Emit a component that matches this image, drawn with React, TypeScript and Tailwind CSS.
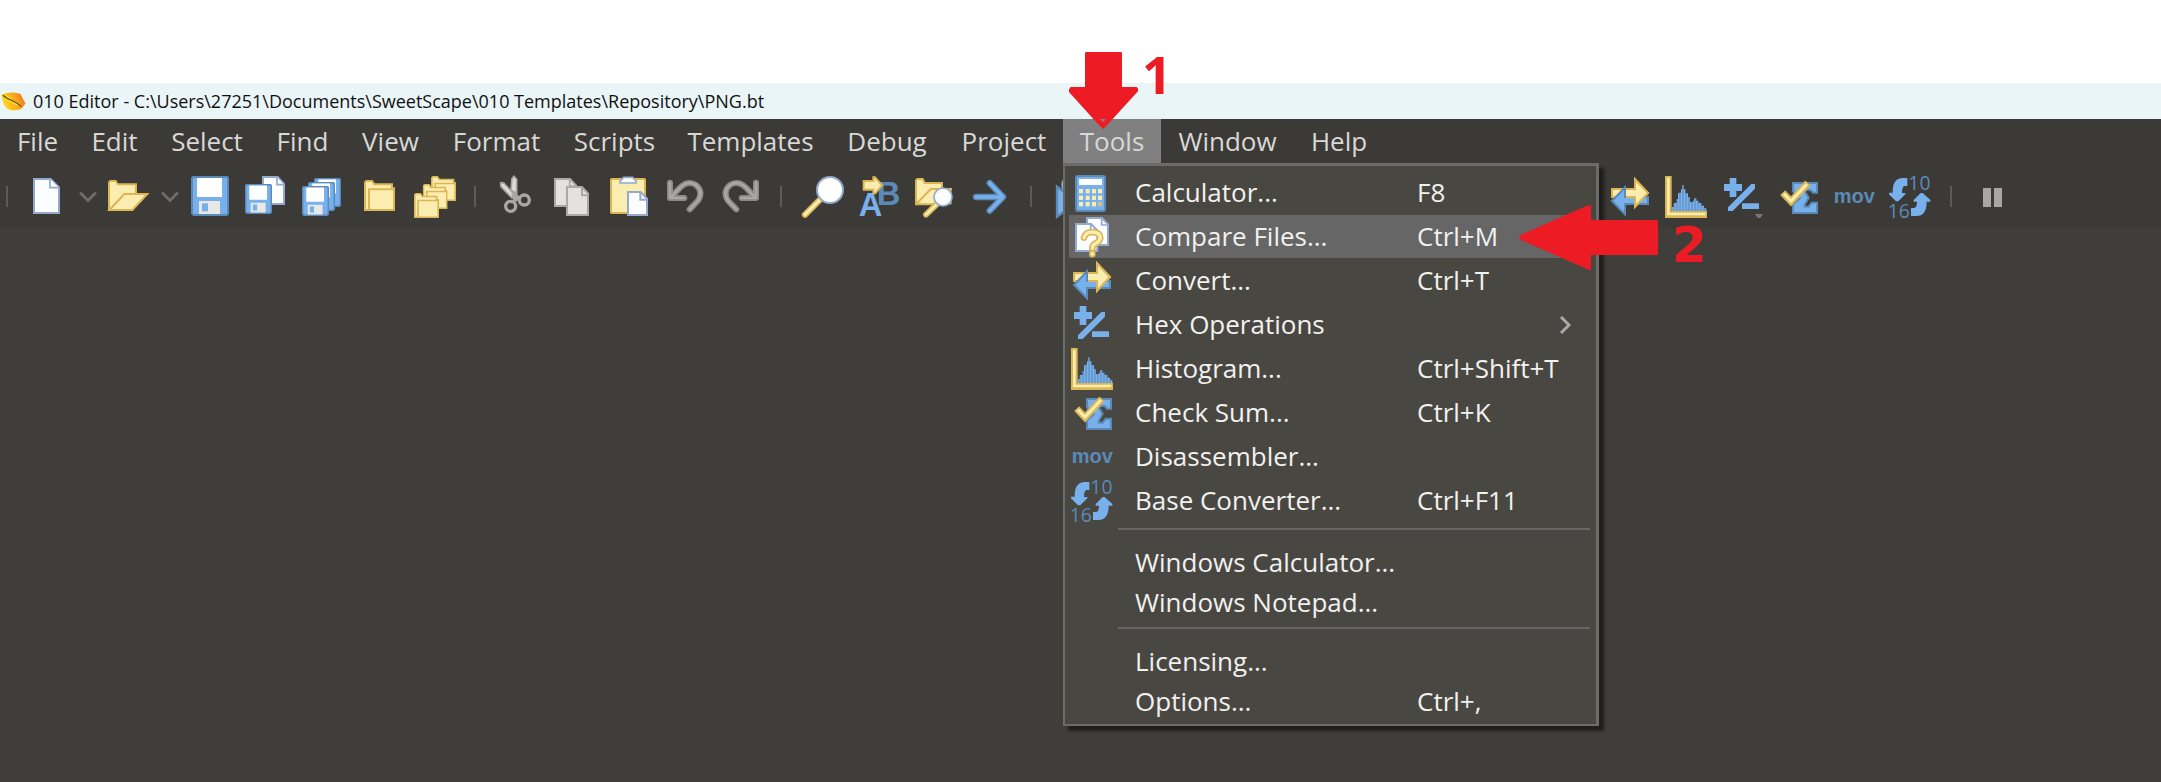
import React from "react";

type IconProps = { box: string; children: React.ReactNode };

const BLUE = "#78b0ec";
const EDGE = "#5b8ab8";
const CREAM = "#fbedb0";
const GOLD = "#dab655";
const PAPER = "#fcfdff";
const SLATE = "#93a9ce";

function Icon({ box, children }: IconProps) {
  return (
    <svg viewBox={box} className="h-[42px] w-[42px] shrink-0 overflow-visible" aria-hidden="true">
      {children}
    </svg>
  );
}

const NewIcon = () => (
  <Icon box="78 303 126 126">
    <path d="M102 312H152L177 337V414H102Z" fill={PAPER} stroke={SLATE} strokeWidth="6" />
    <path d="M150 312V338H177" fill={PAPER} stroke={SLATE} strokeWidth="5" />
  </Icon>
);

const OpenIcon = () => (
  <Icon box="324 303 126 126">
    <path d="M327 405V322L331 318H347L353 328H408V357" fill={CREAM} stroke={GOLD} strokeWidth="6" />
    <path d="M328 405L373 357H442L397 405Z" fill={CREAM} stroke={GOLD} strokeWidth="6" />
  </Icon>
);

function Disk({ x, y, w, h }: { x: number; y: number; w: number; h: number }) {
  return (
    <svg x={x} y={y} width={w} height={h} viewBox="0 0 114 120" preserveAspectRatio="none">
      <path d="M6 3H108L111 6V113L107 117H8L3 112V6Z" fill={BLUE} stroke={EDGE} strokeWidth="6" />
      <rect x="18" y="6" width="75" height="57" fill="#fff" />
      <rect x="24" y="75" width="63" height="39" fill="#e8e8e6" />
      <rect x="33" y="82" width="18" height="24" fill={BLUE} />
    </svg>
  );
}

const SaveIcon = () => (
  <Icon box="567 303 126 126">
    <Disk x={573} y={303} w={114} h={120} />
  </Icon>
);

const SaveAsIcon = () => (
  <Icon box="735 303 126 126">
    <path d="M789 306H833L852 327V387H789Z" fill={PAPER} stroke={SLATE} strokeWidth="6" />
    <path d="M831 306V329H852" fill={PAPER} stroke={SLATE} strokeWidth="5" />
    <Disk x={735} y={327} w={81} h={90} />
  </Icon>
);

const SaveAllIcon = () => (
  <Icon box="903 303 126 126">
    <Disk x={942} y={309} w={81} h={87} />
    <Disk x={924} y={321} w={81} h={87} />
    <Disk x={906} y={333} w={81} h={90} />
  </Icon>
);

function FolderShape({ x, y, w, h }: { x: number; y: number; w: number; h: number }) {
  return (
    <svg x={x} y={y} width={w} height={h} viewBox="0 0 93 93" preserveAspectRatio="none">
      <path d="M3 90V7L7 3H24L31 13H84V25H90V90Z" fill={CREAM} stroke={GOLD} strokeWidth="6" />
      <path d="M15 90V28H90" fill="none" stroke={GOLD} strokeWidth="6" />
    </svg>
  );
}

const FolderIcon = () => (
  <Icon box="1071 303 126 126">
    <FolderShape x={1092} y={315} w={93} h={93} />
  </Icon>
);

const FoldersIcon = () => (
  <Icon box="1239 303 126 126">
    <FolderShape x={1293} y={303} w={75} h={75} />
    <FolderShape x={1268} y={327} w={75} h={75} />
    <FolderShape x={1242} y={354} w={75} h={75} />
  </Icon>
);

const CutIcon = () => (
  <Icon box="165 198 126 126">
    <path d="M216 206L222 199L230 208V250L213 240Z" fill="#deddd9" stroke="#a8a7a3" strokeWidth="5" />
    <path d="M182 218L191 219L224 254L216 264L183 230Z" fill="#deddd9" stroke="#a8a7a3" strokeWidth="5" />
    <path d="M213 250H229L243 266L222 278Z" fill="#a8a7a3" />
    <circle cx="212" cy="289" r="15" fill="none" stroke="#a8a7a3" strokeWidth="10" />
    <circle cx="253" cy="270" r="15" fill="none" stroke="#a8a7a3" strokeWidth="10" />
  </Icon>
);

const CopyIcon = () => (
  <Icon box="333 198 126 126">
    <path d="M345 207H390L408 226V288H345Z" fill="#e3e2df" stroke="#aaa9a5" strokeWidth="6" />
    <path d="M389 207V228H408" fill="none" stroke="#aaa9a5" strokeWidth="5" />
    <path d="M381 231H426L444 250V315H381Z" fill="#e3e2df" stroke="#aaa9a5" strokeWidth="6" />
    <path d="M426 231V256H444" fill="none" stroke="#aaa9a5" strokeWidth="6" />
  </Icon>
);

const PasteIcon = () => (
  <Icon box="501 198 126 126">
    <rect x="513" y="207" width="102" height="102" rx="2" fill={CREAM} stroke={GOLD} strokeWidth="6" />
    <path d="M540 219V214L551 202H578L588 213V219Z" fill={PAPER} stroke={SLATE} strokeWidth="5" />
    <path d="M564 246H602L621 266V315H564Z" fill={PAPER} stroke={SLATE} strokeWidth="6" />
    <path d="M601 246V269H621" fill="none" stroke={SLATE} strokeWidth="6" />
  </Icon>
);

const bend = "M690 218V264H733M692 262L721 232Q744 210 768 225Q791 245 774 272L749 298";

const UndoIcon = () => (
  <Icon box="669 198 126 126">
    <path d={bend} fill="none" stroke="#8b8a86" strokeWidth="18" strokeLinecap="round" strokeLinejoin="round" />
    <path d={bend} fill="none" stroke="#a9a8a4" strokeWidth="8" strokeLinecap="round" strokeLinejoin="round" />
  </Icon>
);

const RedoIcon = () => (
  <Icon box="837 198 126 126">
    <g transform="translate(1638 0) scale(-1 1)">
      <path d={bend} fill="none" stroke="#8b8a86" strokeWidth="18" strokeLinecap="round" strokeLinejoin="round" />
      <path d={bend} fill="none" stroke="#a9a8a4" strokeWidth="8" strokeLinecap="round" strokeLinejoin="round" />
    </g>
  </Icon>
);

const FindIcon = () => (
  <Icon box="63 198 126 126">
    <path d="M121 268L75 314" stroke={GOLD} strokeWidth="19" strokeLinecap="round" />
    <path d="M121 268L75 314" stroke={CREAM} strokeWidth="9" strokeLinecap="round" />
    <circle cx="150" cy="240" r="39" fill="#fff" stroke={SLATE} strokeWidth="6" />
  </Icon>
);

const ReplaceIcon = () => (
  <Icon box="231 198 126 126">
    <text x="290" y="285" fontSize="98" fontWeight="700" fill={EDGE} fontFamily="Liberation Sans, sans-serif">B</text>
    <text x="236" y="318" fontSize="98" fontWeight="700" fill={BLUE} fontFamily="Liberation Sans, sans-serif">A</text>
    <path d="M251 213H280V202H285L306 226L286 250H280V239H251Z" fill={CREAM} stroke={GOLD} strokeWidth="6" />
  </Icon>
);

const FindFilesIcon = () => (
  <Icon box="399 198 126 126">
    <path d="M408 283V211L412 207H428L434 219H489V237H514V283Z" fill={CREAM} />
    <path d="M486 237V219H434L428 207H412L408 211V283H462M408 283L452 237H516" fill="none" stroke={GOLD} strokeWidth="6" />
    <path d="M474 279L438 314" stroke={GOLD} strokeWidth="18" strokeLinecap="round" />
    <path d="M474 279L438 314" stroke={CREAM} strokeWidth="8" strokeLinecap="round" />
    <circle cx="489" cy="261" r="27" fill={PAPER} stroke={SLATE} strokeWidth="5" />
  </Icon>
);

const GotoIcon = () => (
  <Icon box="567 198 126 126">
    <path d="M588 261H666M629 219L669 261L629 302" fill="none" stroke={EDGE} strokeWidth="19" strokeLinecap="round" strokeLinejoin="round" />
    <path d="M588 261H666M629 219L669 261L629 302" fill="none" stroke={BLUE} strokeWidth="10" strokeLinecap="round" strokeLinejoin="round" />
  </Icon>
);

const RunIcon = () => (
  <Icon box="813 198 126 126">
    <circle cx="876" cy="225" r="29" fill={PAPER} stroke={SLATE} strokeWidth="6" />
    <path d="M831 230L890 276L831 320Z" fill={BLUE} stroke={EDGE} strokeWidth="7" />
  </Icon>
);

const ConvertIcon = () => (
  <Icon box="57 48 126 126">
    <path d="M66 87H135V58L174 99L135 140V111H66Z" fill={CREAM} stroke={GOLD} strokeWidth="6" />
    <path d="M174 111H105V82L66 123L105 163V132H174Z" fill={BLUE} stroke={EDGE} strokeWidth="6" />
    <path d="M108 87H135V58L174 99L135 140V111H108" fill={CREAM} stroke={GOLD} strokeWidth="6" />
  </Icon>
);

const HistogramIcon = () => (
  <Icon box="225 48 126 126">
    <path d="M246 153V141H252V129H261V117H264V100H273V88H277V76H281V88H286V100H294V112H300V126H309V122H312V115H319V122H325V129H334V137H342V145H349V153Z" fill={BLUE} />
    <path d="M252 131V153M261 117V153M270 96V153M279 76V153M288 100V153M297 113V153M306 126V153M315 115V153M324 124V153M333 132V153M342 142V153" stroke={EDGE} strokeWidth="3" />
    <path d="M225 48H245V153H351V174H225Z" fill={GOLD} />
    <path d="M231 53H239V158H346V166H231Z" fill={CREAM} />
  </Icon>
);

const OperationsIcon = ({ arrow = false }: { arrow?: boolean }) => (
  <Icon box="393 48 126 126">
    <path d="M419 54H439V72H456V93H439V111H419V93H402V72H419ZM456 130H507V147H456ZM484 72H495V86L428 153H414V142Z" fill={BLUE} />
    {arrow && <path d="M495 162H519L511 174H503Z" fill="#777672" />}
  </Icon>
);

const CheckSumIcon = () => (
  <Icon box="561 48 126 126">
    <path d="M609 69H681V98H669L662 90H646V97L656 113L644 134V140H656L665 128H681V159H609V133L630 114L609 94Z" fill={BLUE} stroke={EDGE} strokeWidth="6" />
    <path d="M578 98L603 124L654 69" fill="none" stroke={GOLD} strokeWidth="21" />
    <path d="M581 101L603 123L651 72" fill="none" stroke={CREAM} strokeWidth="9" />
  </Icon>
);

const MovIcon = () => (
  <Icon box="729 48 126 126">
    <text x="731" y="129" fontSize="60" fontWeight="700" fill={EDGE} fontFamily="Liberation Sans, sans-serif">mov</text>
  </Icon>
);

const BaseIcon = () => (
  <Icon box="903 48 126 126">
    <path d="M958 54V78H950Q942 79 942 99H952V103L931 124H924L903 103V98H914Q913 54 945 54Z" fill={BLUE} />
    <path d="M969 168V144H978Q987 143 987 125H977V120L998 99H1004L1027 120V125H1016Q1016 168 985 168Z" fill={BLUE} />
    <text x="961" y="91" fontSize="58" fill={EDGE} fontFamily="Open Sans, sans-serif">10</text>
    <text x="899" y="173" fontSize="58" fill={EDGE} fontFamily="Open Sans, sans-serif">16</text>
  </Icon>
);

const CalculatorIcon = () => (
  <Icon box="93 393 126 126">
    <rect x="108" y="405" width="87" height="105" rx="5" fill={BLUE} stroke={EDGE} strokeWidth="6" />
    <rect x="117" y="414" width="69" height="18" fill="#fff" />
    {[444, 464, 483].map((y) =>
      [117, 137, 156, 174].map((x) => (
        <rect key={`${x}-${y}`} x={x} y={y} width="12" height="13" fill={x === 174 && y === 483 ? "#cdbf86" : CREAM} />
      ))
    )}
  </Icon>
);

const mark = "M132 590Q137 573 157 573Q181 574 181 591Q180 600 169 606Q157 612 157 622M157 637V640";

const CompareIcon = () => (
  <Icon box="93 525 126 126">
    <path d="M141 531H186L204 550V612H141Z" fill={PAPER} stroke={SLATE} strokeWidth="6" />
    <path d="M185 531V552H204" fill="none" stroke={SLATE} strokeWidth="5" />
    <path d="M108 549H153L172 568V630H108Z" fill={PAPER} stroke={SLATE} strokeWidth="6" />
    <path d="M152 549V569H171" fill="none" stroke={SLATE} strokeWidth="5" />
    <path d={mark} fill="none" stroke={GOLD} strokeWidth="20" strokeLinecap="round" />
    <path d={mark} fill="none" stroke={CREAM} strokeWidth="10" strokeLinecap="round" />
  </Icon>
);

function Chevron() {
  return (
    <svg viewBox="0 0 18 12" className="h-3 w-[18px]" aria-hidden="true">
      <path d="M1 1.5L9 9.5L17 1.5" fill="none" stroke="#6d6c6a" strokeWidth="3" />
    </svg>
  );
}

function Tool({ label, children }: { label: string; children: React.ReactNode }) {
  return (
    <button type="button" aria-label={label} className="flex shrink-0">
      {children}
    </button>
  );
}

const Divider = () => <span className="mx-[5px] h-[21px] w-[2px] shrink-0 bg-[#5c5b5b]" />;

const menusBefore = [
  { name: "File", width: "w-[75px]" },
  { name: "Edit", width: "w-[79px]" },
  { name: "Select", width: "w-[106px]" },
  { name: "Find", width: "w-[85px]" },
  { name: "View", width: "w-[91px]" },
  { name: "Format", width: "w-[121px]" },
  { name: "Scripts", width: "w-[115px]" },
  { name: "Templates", width: "w-[157px]" },
  { name: "Debug", width: "w-[116px]" },
  { name: "Project", width: "w-[118px]" },
];

const menusAfter = [
  { name: "Window", width: "w-[133px]" },
  { name: "Help", width: "w-[90px]" },
];

type Entry = { label: string; keys?: string; icon?: React.ReactNode; active?: boolean; submenu?: boolean };

const toolEntries: Entry[] = [
  { label: "Calculator...", keys: "F8", icon: <CalculatorIcon /> },
  { label: "Compare Files...", keys: "Ctrl+M", icon: <CompareIcon />, active: true },
  { label: "Convert...", keys: "Ctrl+T", icon: <ConvertIcon /> },
  { label: "Hex Operations", icon: <OperationsIcon />, submenu: true },
  { label: "Histogram...", keys: "Ctrl+Shift+T", icon: <HistogramIcon /> },
  { label: "Check Sum...", keys: "Ctrl+K", icon: <CheckSumIcon /> },
  { label: "Disassembler...", icon: <MovIcon /> },
  { label: "Base Converter...", keys: "Ctrl+F11", icon: <BaseIcon /> },
];

const windowsEntries: Entry[] = [{ label: "Windows Calculator..." }, { label: "Windows Notepad..." }];
const optionEntries: Entry[] = [{ label: "Licensing..." }, { label: "Options...", keys: "Ctrl+," }];

function MenuRow({ entry, tall }: { entry: Entry; tall?: boolean }) {
  return (
    <li className={`relative ml-1 mr-[6px] flex ${tall ? "h-11" : "h-10"}`}>
      <button
        type="button"
        className={`flex w-full items-center pl-[2px] text-left ${tall ? "h-[43px]" : "h-10"} ${entry.active ? "bg-[#666666]" : ""}`}
      >
        <span className="flex w-[64px] shrink-0">{entry.icon}</span>
        <span className="w-[282px] shrink-0">{entry.label}</span>
        <span className="grow">{entry.keys}</span>
        {entry.submenu && (
          <svg viewBox="0 0 12 18" className="mr-[19px] h-[18px] w-3" aria-hidden="true">
            <path d="M2 1L10 9L2 17" fill="none" stroke="#aaa9a6" strokeWidth="3" />
          </svg>
        )}
      </button>
      {entry.active && (
        <span className="pointer-events-none absolute -top-[10px] left-[450px] flex items-start gap-[14px]">
          <svg viewBox="387 282 417 195" className="h-[65px] w-[139px]" aria-hidden="true">
            <path d="M387 379L391 372L590 284L603 282V327H801L804 330V432H603V474L598 477L391 386Z" fill="#ed1c24" />
          </svg>
          <span className="pt-4 font-['DejaVu_Sans',sans-serif] text-[50px] font-bold leading-[48px] text-[#ed1c24]">2</span>
        </span>
      )}
    </li>
  );
}

const Separator = () => <li role="separator" className="mb-3 ml-[53px] mr-[6px] mt-[5px] h-[2px] bg-[#666665]" />;

function ToolsMenu() {
  return (
    <ul className="absolute left-0 top-11 z-10 w-[536px] border-b-2 border-l-2 border-r-[3px] border-t-[3px] border-[#6b6b6c] bg-[#494742] pb-[3px] pt-[5px] text-[26px] text-[#f1f1ef] shadow-[5px_5px_3px_rgba(20,20,16,0.75)]">
      {toolEntries.map((e) => (
        <MenuRow key={e.label} entry={e} tall />
      ))}
      <Separator />
      {windowsEntries.map((e) => (
        <MenuRow key={e.label} entry={e} />
      ))}
      <Separator />
      {optionEntries.map((e) => (
        <MenuRow key={e.label} entry={e} />
      ))}
    </ul>
  );
}

export default function App() {
  return (
    <div className="flex min-h-screen flex-col overflow-hidden bg-white pt-[83px] font-['Open_Sans','Noto_Sans',sans-serif]">
      <header className="flex h-9 items-center gap-[7px] bg-[#eaf5f7] text-[18px] text-[#111]">
        <svg viewBox="0 0 78 58" className="h-[19px] w-[26px]" aria-hidden="true">
          <defs>
            <linearGradient id="candy" x1="0" y1="0.6" x2="1" y2="0.3">
              <stop offset="0" stopColor="#ffe21c" />
              <stop offset="0.5" stopColor="#fbb01c" />
              <stop offset="1" stopColor="#ef7421" />
            </linearGradient>
          </defs>
          <path d="M4 8Q30 -4 62 6L77 35L66 50Q40 62 20 50Q6 36 4 8Z" fill="url(#candy)" />
          <path d="M6 8Q26 12 38 26Q54 30 66 46Q48 42 36 32Q16 26 6 8Z" fill="#ffe53a" />
          <path d="M8 10Q22 22 36 26Q52 34 64 44" fill="none" stroke="#5d4a14" strokeWidth="4" />
        </svg>
        <h1>010 Editor - C:\Users\27251\Documents\SweetScape\010 Templates\Repository\PNG.bt</h1>
      </header>

      <nav className="flex h-11 bg-[#3c3a36] text-[26px] text-[#d8d8d6]">
        {menusBefore.map((m) => (
          <button key={m.name} type="button" className={`${m.width} shrink-0`}>
            {m.name}
          </button>
        ))}
        <div className="relative w-[98px] shrink-0">
          <button type="button" aria-expanded="true" className="h-full w-full bg-[#808080]">
            Tools
          </button>
          <ToolsMenu />
          <span className="pointer-events-none absolute -top-[67px] left-[6px] z-20 flex items-start gap-1">
            <svg viewBox="87 36 207 231" className="h-[77px] w-[69px]" aria-hidden="true">
              <path d="M135 38L138 36H244L246 38V141H290L294 146V154L207 249L189 267L171 249L87 156V148L92 141H135Z" fill="#ed1c24" />
              <path d="M180 237H198L189 246Z" fill="#808080" />
            </svg>
            <span className="text-[52px] font-bold leading-[44px] text-[#ed1c24]">1</span>
          </span>
        </div>
        {menusAfter.map((m) => (
          <button key={m.name} type="button" className={`${m.width} shrink-0`}>
            {m.name}
          </button>
        ))}
      </nav>

      <div role="toolbar" className="flex h-[65px] items-center gap-[14px] bg-[#3c3a36] pt-[2px]">
        <span className="ml-[6px] mr-1 h-[21px] w-[2px] shrink-0 bg-[#5c5b5b]" />
        <div className="flex items-center gap-[11px]">
          <Tool label="New"><NewIcon /></Tool>
          <Tool label="New options"><Chevron /></Tool>
          <Tool label="Open"><OpenIcon /></Tool>
          <Tool label="Open options"><Chevron /></Tool>
        </div>
        <div className="-ml-1 flex gap-[14px]">
          <Tool label="Save"><SaveIcon /></Tool>
          <Tool label="Save as"><SaveAsIcon /></Tool>
          <Tool label="Save all"><SaveAllIcon /></Tool>
          <Tool label="Close"><FolderIcon /></Tool>
          <Tool label="Close all"><FoldersIcon /></Tool>
        </div>
        <Divider />
        <Tool label="Cut"><CutIcon /></Tool>
        <Tool label="Copy"><CopyIcon /></Tool>
        <Tool label="Paste"><PasteIcon /></Tool>
        <Tool label="Undo"><UndoIcon /></Tool>
        <Tool label="Redo"><RedoIcon /></Tool>
        <Divider />
        <Tool label="Find"><FindIcon /></Tool>
        <Tool label="Replace"><ReplaceIcon /></Tool>
        <Tool label="Find in files"><FindFilesIcon /></Tool>
        <Tool label="Go to"><GotoIcon /></Tool>
        <Divider />
        <Tool label="Run"><RunIcon /></Tool>
        <span className="w-[488px] shrink-0" />
        <Tool label="Convert"><ConvertIcon /></Tool>
        <Tool label="Histogram"><HistogramIcon /></Tool>
        <Tool label="Hex operations"><OperationsIcon arrow /></Tool>
        <Tool label="Check sum"><CheckSumIcon /></Tool>
        <Tool label="Disassembler"><MovIcon /></Tool>
        <Tool label="Base converter"><BaseIcon /></Tool>
        <Divider />
        <Tool label="Pause">
          <svg viewBox="0 0 42 42" className="h-[42px] w-[42px]" aria-hidden="true">
            <path d="M12 12H20V31H12ZM23 12H31V31H23Z" fill="#a8a7a3" />
          </svg>
        </Tool>
      </div>

      <main className="grow bg-[#403e3a]" />
    </div>
  );
}
